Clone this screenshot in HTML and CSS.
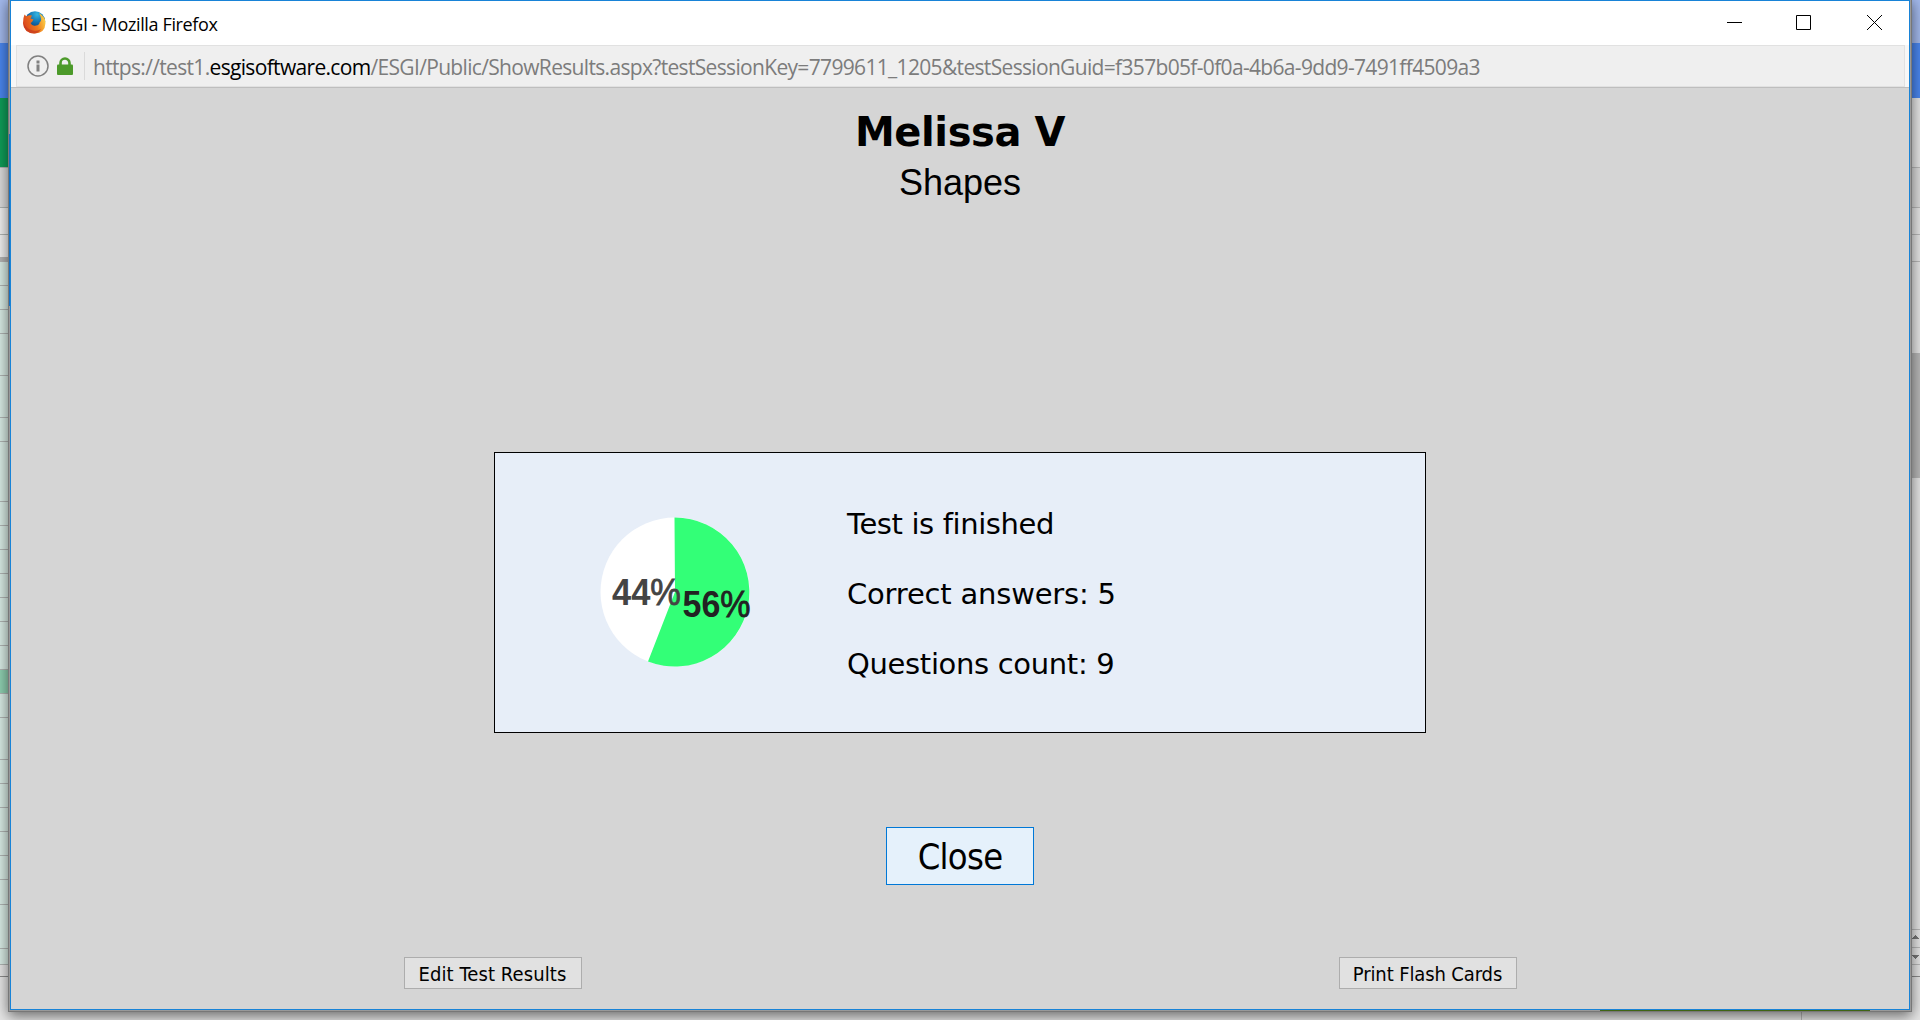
FILE: index.html
```html
<!DOCTYPE html>
<html lang="en">
<head>
<meta charset="utf-8">
<title>ESGI</title>
<link rel="stylesheet" href="styles.css">
</head>
<body>
<svg class="desktop" width="1920" height="1020" viewBox="0 0 1920 1020" shape-rendering="crispEdges" aria-hidden="true">
  <rect width="1920" height="1020" fill="#e6e6e6"/>
  <rect width="1920" height="43" fill="#a3b9ec"/>
  <rect y="43" width="1920" height="55" fill="#4a86ee"/>
  <rect y="98" width="10" height="69" fill="#0f9d58"/>
  <rect y="167" width="1920" height="40" fill="#dcdcdc"/>
  <rect y="207" width="10" height="50" fill="#f0f0f0"/>
  <rect y="261" width="10" height="703" fill="#d9ece5"/>
  <rect y="669" width="10" height="24" fill="#8fd0b1"/>
  <path fill="none" stroke="#b0b5b3" d="M0 167.500H10M0 207.500H10M0 234.500H10M0 285.500H10M0 309.500H10M0 333.500H10M0 375.500H10M0 417.500H10M0 441.500H10M0 501.500H10M0 525.500H10M0 549.500H10M0 573.500H10M0 597.500H10M0 621.500H10M0 645.500H10M0 669.500H10M0 693.500H10M0 717.500H10M0 759.500H10M0 783.500H10M0 807.500H10M0 831.500H10M0 855.500H10M0 879.500H10M0 904.500H10M0 948.500H10M0 964.500H10"/>
  <rect y="257" width="10" height="5" fill="#b4b4b4"/>
  <path fill="none" stroke="#b9b9b9" d="M1910 167.500h10M1910 207.500h10M1910 234.500h10M1910 261.500h10M1910 929.500h10M1910 947.500h10M1910 964.500h10M1801.500 1010v10"/>
  <path fill="none" stroke="#8c8c8c" d="M0 976.500H1920"/>
  <rect x="1910" y="353" width="10" height="125" fill="#b8b8b8"/>
  <path fill="#777" d="M1912 939h7l-3.500-4zM1912 955h7l-3.500 4z"/>
</svg>
<main class="window">
  <header class="titlebar">
    <svg class="logo" width="23" height="23" viewBox="0 0 23 23" aria-hidden="true">
      <defs>
        <radialGradient id="globe" cx=".6" cy=".15" r=".8"><stop offset="0" stop-color="#35b6e2"/><stop offset=".5" stop-color="#126fae"/><stop offset="1" stop-color="#14305f"/></radialGradient>
        <linearGradient id="tail" x1="0" y1=".6" x2="1" y2=".3"><stop offset="0" stop-color="#d9431e"/><stop offset=".55" stop-color="#ee7a1c"/><stop offset="1" stop-color="#fcd34a"/></linearGradient>
      </defs>
      <circle cx="12" cy="10.500" r="10.200" fill="url(#globe)"/>
      <path fill="url(#tail)" d="M1.500 3.500 3.500 5.500Q6 3.500 9 4.500L7.500 7.500 10.500 8.500 9 11 7.500 12Q9 15.500 13 14.500 16.500 14 16.500 11.500 19 10 17.500 5.500L16 2Q22.500 6 22.500 12 22 22.500 11.500 22.500 .5 22 0 12 0 7 1.500 3.500Z"/>
      <path fill="#c73a1d" opacity=".75" d="M0 11Q3 18 10 19.500 15 20.500 18 18 15 22.500 11 22.500 1 22 0 11Z"/>
    </svg>
    <span class="window-title">ESGI - Mozilla Firefox</span>
    <svg class="controls" width="155" height="15" viewBox="0 0 155 15" fill="none" stroke="#000" aria-hidden="true">
      <path d="M0 7.500h15M69.500 .5h14v14h-14z"/><path d="M140 0l15 15M155 0l-15 15"/>
    </svg>
  </header>
  <div class="toolbar">
    <div class="urlbar">
      <svg width="22" height="22" viewBox="0 0 22 22" aria-hidden="true"><circle cx="11" cy="11" r="10" fill="none" stroke="#808080" stroke-width="1.500"/><path fill="#808080" d="M9.500 5.500h3v3h-3zM9.500 9.500h3v7h-3z"/></svg>
      <svg class="lock" width="16" height="18" viewBox="0 0 16 18" aria-hidden="true"><path d="M3.500 9V6a4.500 4.500 0 0 1 9 0v3" fill="none" stroke="#4c9a2a" stroke-width="2.600"/><rect y="7.500" width="16" height="10.500" rx="1" fill="#4c9a2a"/></svg>
      <span class="divider"></span>
      <span class="url">https://test1.<b>esgisoftware.com</b>/ESGI/Public/ShowResults.aspx?testSessionKey=7799611_1205&amp;testSessionGuid=f357b05f-0f0a-4b6a-9dd9-7491ff4509a3</span>
    </div>
  </div>
  <section class="page">
    <h1 class="student">Melissa V</h1>
    <p class="test-name">Shapes</p>
    <div class="results">
      <svg class="pie" width="150" height="150" viewBox="0 0 150 150" role="img" aria-label="Score">
        <circle cx="75" cy="75" r="74.500" fill="#fff"/>
        <path fill="#33ff77" d="M74.500 .5A74.500 74.500 0 1 1 48 144.500L75 75Z"/>
        <text class="share wrong" x="12" y="88" textLength="69" lengthAdjust="spacingAndGlyphs">44<tspan class="sign">%</tspan></text>
        <text class="share right" x="82.500" y="99.500" textLength="68" lengthAdjust="spacingAndGlyphs">56<tspan class="sign">%</tspan></text>
      </svg>
      <div class="summary">
        <p class="line-status">Test is finished</p>
        <p class="line-correct">Correct answers: 5</p>
        <p class="line-count">Questions count: 9</p>
      </div>
    </div>
    <button class="close" type="button">Close</button>
    <footer class="actions">
      <button class="edit" type="button">Edit Test Results</button>
      <button class="print" type="button">Print Flash Cards</button>
    </footer>
  </section>
</main>
</body>
</html>
```

FILE: styles.css
```css
* { box-sizing: border-box; }
body { margin: 0; width: 1920px; height: 1020px; overflow: hidden; }
p, h1 { margin: 0; }
.desktop { position: absolute; top: 0; left: 0; }
.window {
  position: absolute; top: 0; left: 10px;
  width: 1900px; height: 1010px;
  display: flex; flex-direction: column;
  background: #d5d5d5;
  border: 1px solid #1883d7;
  box-shadow: 0 0 0 1px #999, 0 0 0 2px #777, 0 4px 13px 2px rgba(0, 0, 0, .55);
}
/* slivers of the windows behind, along the frame */
.window::before {
  content: ""; position: absolute; top: 133px; left: -2px;
  width: 1px; height: 172px; background: #1670c0;
}
.window::after {
  content: ""; position: absolute; bottom: -2px; left: 1589px;
  width: 270px; height: 1px; background: #3f6414;
}
.titlebar {
  height: 44px; padding: 0 27px 1px 12px;
  display: flex; align-items: center;
  background: #fff;
}
.window-title {
  margin: 2px 0 0 5px;
  font: 18px/24px "Open Sans", sans-serif;
  letter-spacing: -.36px;
  white-space: nowrap;
}
.controls { margin-left: auto; }
.toolbar { height: 43px; padding: 0 4px 0 5px; background: #f7f7f7; border-bottom: 1px solid #bebebe; }
.urlbar {
  height: 42px; padding-left: 10px;
  display: flex; align-items: center;
  background: #efefef; border: 1px solid #e1e1e1;
}
.lock { margin-left: 8px; }
.divider { width: 1px; height: 28px; margin: 0 8px 0 11px; background: #dadada; }
.url {
  margin-top: 2px;
  font: 21px/28px "Open Sans", sans-serif;
  letter-spacing: -.67px; color: #7c7c7c; white-space: nowrap;
}
.url b { font-weight: 400; color: #000; }
.page { flex: 1; display: flex; flex-direction: column; align-items: center; }
.student { margin-top: 20px; font: bold 40px/48px "DejaVu Sans", sans-serif; letter-spacing: -.4px; }
.test-name { margin-top: 6px; font: 36px/42px "Liberation Sans", sans-serif; }
.results {
  width: 932px; height: 281px; margin-top: 248px;
  display: flex; align-items: center;
  padding-left: 105px;
  background: #e7eef8; border: 1px solid #000;
}
.pie { margin-bottom: 2px; overflow: visible; }
.share { font: bold 36px "Liberation Sans", sans-serif; }
.wrong { fill: #444; stroke: #444; stroke-width: 0; }
.right { fill: #222; stroke: #222; stroke-width: 0; }
.sign { font-weight: 400; stroke-width: .8px; }
.summary {
  margin: 2px 0 0 97px;
  font: 29px/70px "DejaVu Sans", sans-serif;
  white-space: nowrap;
}
.line-status { letter-spacing: -.38px; }
.line-correct { letter-spacing: -.2px; }
.line-count { letter-spacing: -.33px; }
button { padding: 0; border: 1px solid #adadad; background: #e1e1e1; color: #000; white-space: nowrap; }
.close {
  width: 148px; height: 58px; margin-top: 94px; padding-top: 2px;
  background: #e5f1fb; border-color: #0078d7;
  font: 36px/50px "DejaVu Sans Condensed", "DejaVu Sans", sans-serif;
  letter-spacing: -.7px;
}
.actions { width: 1113px; margin-top: 72px; display: flex; justify-content: space-between; }
.actions button {
  width: 178px; height: 32px; padding-top: 2px;
  font: 20px/26px "DejaVu Sans Condensed", "DejaVu Sans", sans-serif;
}
.edit { letter-spacing: .1px; }
.print { letter-spacing: -.12px; }
```
